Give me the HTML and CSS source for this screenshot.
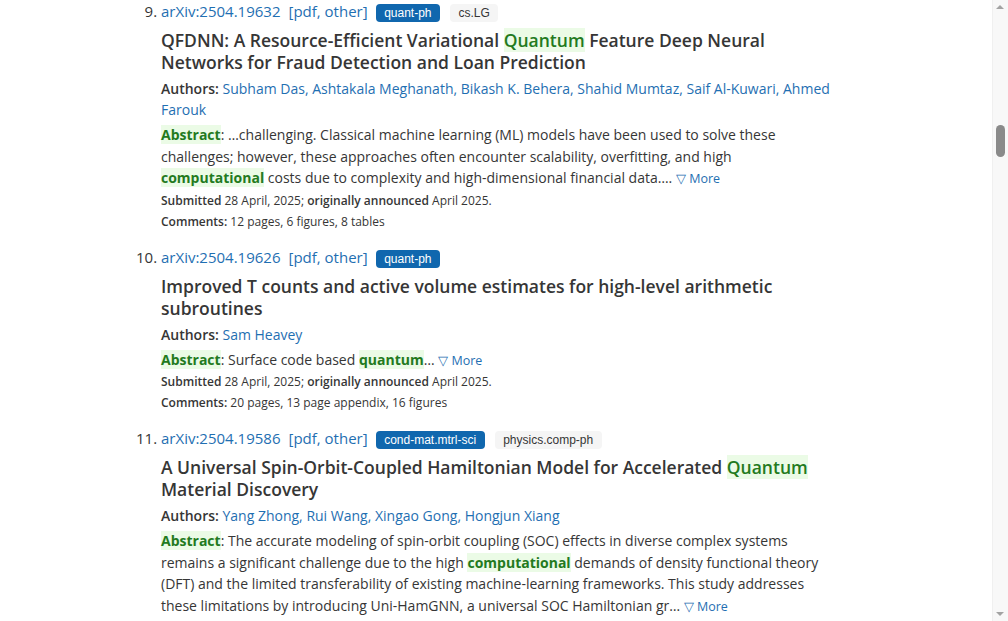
FILE: index.html
```html
<!DOCTYPE html>
<html lang="en">
<head>
<meta charset="utf-8">
<title>Search results</title>
<link rel="stylesheet" href="styles.css">
</head>
<body>
<main class="page">
  <ol class="results" start="9">
    <li class="result">
      <div class="list-title">
        <a href="#">arXiv:2504.19632</a><span class="formats">[<a href="#">pdf</a>, <a href="#">other</a>]</span><span class="tag tag-primary">quant-ph</span><span class="tag tag-light">cs.LG</span>
      </div>
      <p class="title">QFDNN: A Resource-Efficient Variational <span class="hit">Quantum</span> Feature Deep Neural Networks for Fraud Detection and Loan Prediction</p>
      <p class="authors"><span class="label">Authors:</span> <a href="#">Subham Das</a>, <a href="#">Ashtakala Meghanath</a>, <a href="#">Bikash K. Behera</a>, <a href="#">Shahid Mumtaz</a>, <a href="#">Saif Al-Kuwari</a>, <a href="#">Ahmed Farouk</a></p>
      <p class="abstract"><span class="hit strong">Abstract</span>: …challenging. Classical machine learning (ML) models have been used to solve these challenges; however, these approaches often encounter scalability, overfitting, and high <span class="hit strong">computational</span> costs due to complexity and high-dimensional financial data…. <a class="more" href="#">▽ More</a></p>
      <p class="meta"><b>Submitted</b> 28 April, 2025; <b>originally announced</b> April 2025.</p>
      <p class="meta"><b>Comments:</b> 12 pages, 6 figures, 8 tables</p>
    </li>
    <li class="result">
      <div class="list-title">
        <a href="#">arXiv:2504.19626</a><span class="formats">[<a href="#">pdf</a>, <a href="#">other</a>]</span><span class="tag tag-primary">quant-ph</span>
      </div>
      <p class="title">Improved T counts and active volume estimates for high-level arithmetic subroutines</p>
      <p class="authors"><span class="label">Authors:</span> <a href="#">Sam Heavey</a></p>
      <p class="abstract"><span class="hit strong">Abstract</span>: Surface code based <span class="hit strong">quantum</span>… <a class="more" href="#">▽ More</a></p>
      <p class="meta"><b>Submitted</b> 28 April, 2025; <b>originally announced</b> April 2025.</p>
      <p class="meta"><b>Comments:</b> 20 pages, 13 page appendix, 16 figures</p>
    </li>
    <li class="result">
      <div class="list-title">
        <a href="#">arXiv:2504.19586</a><span class="formats">[<a href="#">pdf</a>, <a href="#">other</a>]</span><span class="tag tag-primary">cond-mat.mtrl-sci</span><span class="tag tag-light">physics.comp-ph</span>
      </div>
      <p class="title">A Universal Spin-Orbit-Coupled Hamiltonian Model for Accelerated <span class="hit">Quantum</span> Material Discovery</p>
      <p class="authors"><span class="label">Authors:</span> <a href="#">Yang Zhong</a>, <a href="#">Rui Wang</a>, <a href="#">Xingao Gong</a>, <a href="#">Hongjun Xiang</a></p>
      <p class="abstract"><span class="hit strong">Abstract</span>: The accurate modeling of spin-orbit coupling (SOC) effects in diverse complex systems remains a significant challenge due to the high <span class="hit strong">computational</span> demands of density functional theory (DFT) and the limited transferability of existing machine-learning frameworks. This study addresses these limitations by introducing Uni-HamGNN, a universal SOC Hamiltonian gr… <a class="more" href="#">▽ More</a></p>
      <p class="meta"><b>Submitted</b> 28 April, 2025; <b>originally announced</b> April 2025.</p>
    </li>
  </ol>
</main>
<div class="scrollbar" aria-hidden="true">
  <div class="sb-arrow sb-up"></div>
  <div class="sb-thumb"></div>
  <div class="sb-arrow sb-down"></div>
</div>
</body>
</html>
```

FILE: styles.css
```css
html, body {
  margin: 0;
  padding: 0;
  height: 100%;
  overflow: hidden;
  background: #ffffff;
}

body {
  font-family: "Open Sans", "Liberation Sans", sans-serif;
  color: #363636;
}

a {
  color: #1f6fb2;
  text-decoration: none;
}

.page {
  width: 993px;
}

.results {
  margin: -1px 0 0 0;
  padding: 0 0 0 161px;
  width: 672px;
}

.result {
  margin: 0 0 13px 0;
}

.result::marker {
  font-size: 15px;
  color: #363636;
}

.list-title {
  font-size: 15px;
  line-height: 24px;
  white-space: nowrap;
}

.list-title > a,
.formats {
  font-weight: 500;
}

.formats {
  margin-left: 8px;
  color: #1f6fb2;
}

.tag {
  display: inline-block;
  font-family: "Liberation Sans", Arial, sans-serif;
  font-size: 12px;
  line-height: 18px;
  height: 18px;
  padding: 0 8.5px;
  border-radius: 4px;
}

.tag-primary {
  background: #1067ae;
  color: #ffffff;
  margin-left: 8px;
}

.tag-light {
  background: #f5f5f5;
  color: #363636;
  margin-left: 10px;
}

.title {
  margin: 6px 0 0 0;
  font-size: 17.5px;
  line-height: 22px;
  font-weight: 600;
  color: #363636;
}

.authors {
  margin: 5px 0 0 0;
  font-size: 14px;
  line-height: 21px;
  color: #1f6fb2;
}

.authors .label {
  color: #363636;
  font-weight: 600;
}

.abstract {
  margin: 4px 0 0 0;
  font-size: 14px;
  line-height: 21.5px;
  color: #363636;
}

.hit {
  color: #237a1e;
  background: #ebfbe6;
}

.hit.strong {
  font-weight: 700;
}

.more {
  font-size: 12.5px;
}

.meta {
  margin: 0;
  font-size: 12px;
  line-height: 21px;
  color: #363636;
}

.meta b {
  font-weight: 600;
}

.scrollbar {
  position: fixed;
  top: 0;
  right: 0;
  width: 15px;
  height: 621px;
  background: #f8f8f8;
  border-left: 1px solid #f0f0f0;
}

.sb-thumb {
  position: absolute;
  left: 3px;
  width: 9px;
  top: 125px;
  height: 32px;
  border-radius: 5px;
  background: #8a8a8a;
}

.sb-arrow {
  position: absolute;
  left: 3px;
  width: 0;
  height: 0;
  border-left: 4.5px solid transparent;
  border-right: 4.5px solid transparent;
}

.sb-up {
  top: 5px;
  border-bottom: 4.5px solid #a3a3a3;
}

.sb-down {
  bottom: 5px;
  border-top: 4.5px solid #a3a3a3;
}
```
